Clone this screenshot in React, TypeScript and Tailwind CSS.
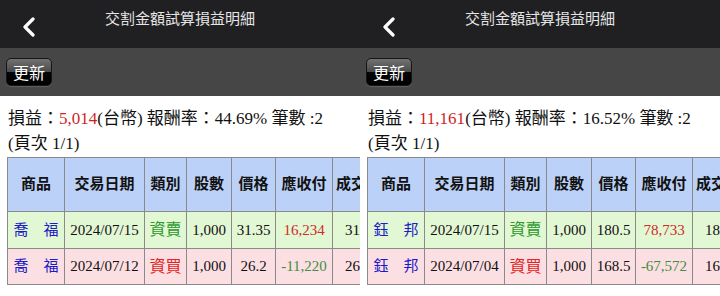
import React from "react";

type Row = {
  name: string;
  date: string;
  side: "資賣" | "資買";
  qty: string;
  price: string;
  amount: string;
  deal: string;
};

type Panel = {
  pnl: string;
  rate: string;
  rows: Row[];
};

const panels: Panel[] = [
  {
    pnl: "5,014",
    rate: "44.69%",
    rows: [
      { name: "喬　福", date: "2024/07/15", side: "資賣", qty: "1,000", price: "31.35", amount: "16,234", deal: "31,350" },
      { name: "喬　福", date: "2024/07/12", side: "資買", qty: "1,000", price: "26.2", amount: "-11,220", deal: "26,200" },
    ],
  },
  {
    pnl: "11,161",
    rate: "16.52%",
    rows: [
      { name: "鈺　邦", date: "2024/07/15", side: "資賣", qty: "1,000", price: "180.5", amount: "78,733", deal: "180,500" },
      { name: "鈺　邦", date: "2024/07/04", side: "資買", qty: "1,000", price: "168.5", amount: "-67,572", deal: "168,500" },
    ],
  },
];

const heads = ["商品", "交易日期", "類別", "股數", "價格", "應收付"];
// last column is cut by the phone edge
const widths = [57, 80, 42, 45, 44, 57, 28];

function Screen({ p }: { p: Panel }) {
  return (
    <div className="w-[360px] h-[296px] overflow-hidden bg-white shrink-0">
      <div className="h-[48px] bg-[#202023] relative">
        <svg className="absolute left-[22px] top-[17px]" width="14" height="20" viewBox="0 0 14 20">
          <path d="M11 2 L3 10 L11 18" fill="none" stroke="#fff" strokeWidth="3.2" strokeLinecap="round" strokeLinejoin="round" />
        </svg>
        <div className="pt-[8px] text-center text-[15px] leading-[20px] text-[#e6e6e6] font-['Noto_Sans_CJK_TC',sans-serif]">
          交割金額試算損益明細
        </div>
      </div>
      <div className="h-[48px] bg-[#464646] pt-[10px] pl-[6px]">
        <button className="w-[46px] h-[28px] rounded-[5px] border border-[#151515] bg-[linear-gradient(to_bottom,#727272_0%,#4a4a4a_50%,#050505_50%,#000_100%)] text-white text-[16px] leading-[26px] font-['Noto_Sans_CJK_TC',sans-serif] shadow-[0_1px_1px_rgba(255,255,255,0.15)]">
          更新
        </button>
      </div>
      <div className="pt-[10px] pl-[8px] text-[17px] leading-[25px] text-[#111] font-['Liberation_Serif','Noto_Sans_CJK_TC',serif] whitespace-nowrap">
        <div>
          損益：<span className="text-[#d01f1f]">{p.pnl}</span>(台幣) 報酬率：{p.rate} 筆數 :2
        </div>
        <div>(頁次 1/1)</div>
      </div>
      <table className="ml-[7px] mt-[1px] table-fixed border-collapse w-[353px]">
        <colgroup>
          {widths.map((w, i) => (
            <col key={i} style={{ width: w }} />
          ))}
        </colgroup>
        <thead>
          <tr className="h-[54px] bg-[#bcd1f8]">
            {heads.map((h) => (
              <th key={h} className="border border-[#8a8a8a] text-[15px] font-bold text-[#111] whitespace-nowrap font-['Liberation_Sans','Noto_Sans_CJK_TC',sans-serif]">
                {h}
              </th>
            ))}
            <th className="border border-[#8a8a8a] border-r-0 pl-[3px] text-left overflow-hidden text-[15px] font-bold text-[#111] whitespace-nowrap font-['Liberation_Sans','Noto_Sans_CJK_TC',sans-serif]">
              成交價
            </th>
          </tr>
        </thead>
        <tbody className="text-[15px] text-[#111] font-['Liberation_Serif','Noto_Sans_CJK_TC',serif]">
          {p.rows.map((r, i) => (
            <tr key={i} className={i === 0 ? "h-[37px] bg-[#e2f7d4]" : "h-[36px] bg-[#fcdfe2]"}>
              <td className="border border-[#8a8a8a] text-center text-[#1b1bc8] whitespace-nowrap">{r.name}</td>
              <td className="border border-[#8a8a8a] text-center whitespace-nowrap">{r.date}</td>
              <td className={`border border-[#8a8a8a] text-center text-[16px] whitespace-nowrap ${r.side === "資賣" ? "text-[#2f9a2f]" : "text-[#e52222]"}`}>
                {r.side}
              </td>
              <td className="border border-[#8a8a8a] text-center">{r.qty}</td>
              <td className="border border-[#8a8a8a] text-center">{r.price}</td>
              <td className={`border border-[#8a8a8a] text-center ${r.amount.startsWith("-") ? "text-[#3f8f3f]" : "text-[#d02a2a]"}`}>
                {r.amount}
              </td>
              <td className="border border-[#8a8a8a] border-r-0 pl-[12px] text-left overflow-hidden whitespace-nowrap">{r.deal}</td>
            </tr>
          ))}
        </tbody>
      </table>
    </div>
  );
}

export default function App() {
  return (
    <div className="flex w-[720px] h-[296px] overflow-hidden">
      {panels.map((p, i) => (
        <Screen key={i} p={p} />
      ))}
    </div>
  );
}
